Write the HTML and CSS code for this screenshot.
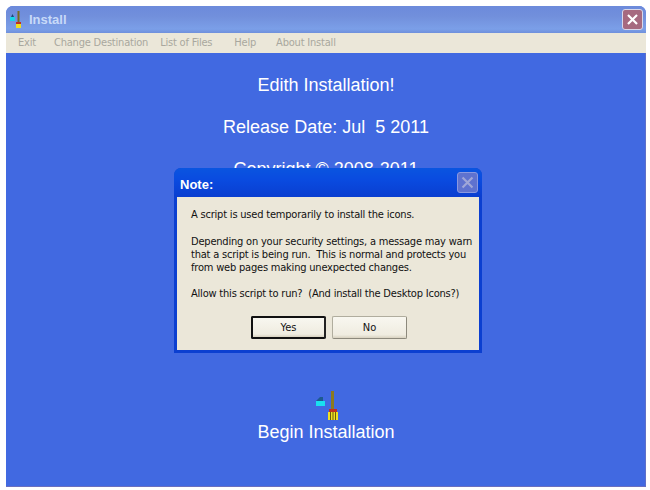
FILE: index.html
```html
<!DOCTYPE html>
<html lang="en">
<head>
    <meta charset="UTF-8">
    <meta name="viewport" content="width=device-width, initial-scale=1.0">
    <title>Install</title>
    <link rel="stylesheet" href="styles.css">
</head>
<body>
    <div class="window">
        <div class="titlebar">
            <svg class="app-icon" width="14" height="18" viewBox="0 0 14 18">
                <rect x="0" y="6" width="5" height="4" fill="#19d5e8"/>
                <path d="M1 6 L2.5 3 L4 6 Z" fill="#1c4a78"/>
                <rect x="7.5" y="0" width="2" height="12" fill="#7a6a20"/>
                <rect x="6" y="12" width="5" height="5" fill="#f0e020"/>
                <rect x="6" y="11" width="5" height="2" fill="#c03020"/>
            </svg>
            <span class="title">Install</span>
            <div class="close-btn">
                <svg width="21" height="21" viewBox="0 0 21 21"><path d="M5.5 5.5 L15.5 15.5 M15.5 5.5 L5.5 15.5" stroke="#fff" stroke-width="2.4"/></svg>
            </div>
        </div>
        <div class="menu">
            <span class="menu-item">Exit</span>
            <span class="menu-item">Change Destination</span>
            <span class="menu-item">List of Files</span>
            <span class="menu-item">Help</span>
            <span class="menu-item">About Install</span>
        </div>
        <div class="content">
            <p class="line">Edith Installation!</p>
            <p class="line">Release Date: Jul &nbsp;5 2011</p>
            <p class="line">Copyright © 2008-2011</p>
            <div class="begin">
                <svg width="30" height="29" viewBox="0 0 30 29">
                    <path d="M5 10 L9 6 L12 6 L12 10 Z" fill="#1c5a90"/>
                    <rect x="5" y="10" width="9" height="5" fill="#19e0f0"/>
                    <rect x="20" y="0" width="3" height="19" fill="#8a7a20"/>
                    <rect x="18" y="18" width="8" height="3" fill="#c03020"/>
                    <rect x="17" y="21" width="10" height="8" fill="#f0e020"/>
                    <path d="M19.5 21 V29 M22 21 V29 M24.5 21 V29" stroke="#6a5a10" stroke-width="1"/>
                </svg>
                <p class="line">Begin Installation</p>
            </div>
        </div>
    </div>

    <div class="dialog">
        <div class="dialog-title">
            <span class="dialog-name">Note:</span>
            <div class="dialog-close">
                <svg width="21" height="21" viewBox="0 0 21 21"><path d="M5 5 L16 16 M16 5 L5 16" stroke="#9fa6d8" stroke-width="2.4"/></svg>
            </div>
        </div>
        <div class="dialog-body">
            <p class="intro">A script is used temporarily to install the icons.</p>
            <p>Depending on your security settings, a message may warn<br>that a script is being run. &nbsp;This is normal and protects you<br>from web pages making unexpected changes.</p>
            <p>Allow this script to run? &nbsp;(And install the Desktop Icons?)</p>
            <div class="dialog-buttons">
                <button class="default">Yes</button>
                <button>No</button>
            </div>
        </div>
    </div>
</body>
</html>
```

FILE: styles.css
```css
body {
    margin: 0;
    height: 490px;
    overflow: hidden;
    background: #fff;
    font-family: "Liberation Sans", Arial, sans-serif;
}
.window {
    margin: 6px 4px 0 6px;
    height: 481px;
    display: flex;
    flex-direction: column;
    background: #4169e1;
    border-radius: 7px 7px 0 0;
    overflow: hidden;
}
.titlebar {
    height: 27px;
    display: flex;
    align-items: center;
    padding: 0 3px 0 4px;
    background: linear-gradient(#6c8adb 0%, #7290dc 40%, #7b9fe8 85%, #6f90dc 100%);
}
.app-icon {
    margin-right: 5px;
}
.title {
    color: #c8daf8;
    font-size: 13px;
    font-weight: bold;
}
.close-btn {
    margin-left: auto;
    width: 21px;
    height: 21px;
    background: #a66a80;
    border: 1px solid #d8d8ea;
    border-radius: 3px;
    box-sizing: border-box;
    display: flex;
    align-items: center;
    justify-content: center;
}
.menu {
    height: 18px;
    padding-bottom: 2px;
    display: flex;
    align-items: center;
    gap: 12px;
    padding-left: 12px;
    background: #ebe7d9;
    color: #a9a79e;
    font-size: 11px;
    letter-spacing: -0.2px;
    font-family: "DejaVu Sans", sans-serif;
    font-stretch: condensed;
}
.menu-item:nth-child(2) {
    margin-left: 6px;
}
.menu-item:nth-child(4) {
    margin-left: 10px;
}
.menu-item:nth-child(5) {
    margin-left: 8px;
}
.content {
    flex: 1;
    display: flex;
    flex-direction: column;
    align-items: center;
    padding: 22px 0 0 1px;
    color: #fff;
    border-right: 1px solid #5f6fc8;
    border-bottom: 1px solid #6a6fc0;
}
.line {
    margin: 0 0 21px;
    font-size: 18px;
    line-height: 21px;
}
.begin {
    margin-top: 190px;
    display: flex;
    flex-direction: column;
    align-items: center;
    gap: 2px;
}
.dialog {
    position: absolute;
    left: 174px;
    top: 168px;
    width: 308px;
    height: 185px;
    box-sizing: border-box;
    padding: 0 3px 3px;
    background: #0b3fd0;
    border-radius: 7px 7px 0 0;
    display: flex;
    flex-direction: column;
}
.dialog-title {
    height: 29px;
    flex: none;
    display: flex;
    align-items: center;
    justify-content: space-between;
    margin: 0 -3px;
    padding: 0 4px 0 6px;
    border-radius: 7px 7px 0 0;
    background: linear-gradient(#0a55e0 0%, #0a4be0 40%, #0a3ed0 100%);
    color: #fff;
    font-size: 13px;
    font-weight: bold;
}
.dialog-name {
    padding-top: 3px;
}
.dialog-close {
    width: 21px;
    height: 21px;
    box-sizing: border-box;
    background: #5f72cf;
    border: 1px solid #8a98e0;
    border-radius: 3px;
    display: flex;
    align-items: center;
    justify-content: center;
}
.dialog-body {
    flex: 1;
    background: #ebe7d9;
    padding: 11px 0 0 14px;
    color: #111;
    font-size: 11px;
    line-height: 13px;
    letter-spacing: -0.2px;
    white-space: nowrap;
    font-family: "DejaVu Sans", sans-serif;
    font-stretch: condensed;
}
.dialog-body p {
    margin: 0 0 13px;
}
.dialog-body .intro {
    margin-bottom: 14px;
}
.dialog-buttons {
    display: flex;
    gap: 6px;
    margin: 16px 0 0 60px;
}
button {
    width: 75px;
    height: 23px;
    padding: 0;
    font-family: "DejaVu Sans", sans-serif;
    font-stretch: condensed;
    font-size: 11px;
    color: #111;
    background: linear-gradient(#f8f7f0, #efece0 85%, #d8d2c0);
    border: 1px solid #b0ad9e;
    border-right-color: #8c897c;
    border-bottom-color: #8c897c;
    border-radius: 2px;
}
button.default {
    border: 2px solid #111;
    border-right-color: #222;
}
```
